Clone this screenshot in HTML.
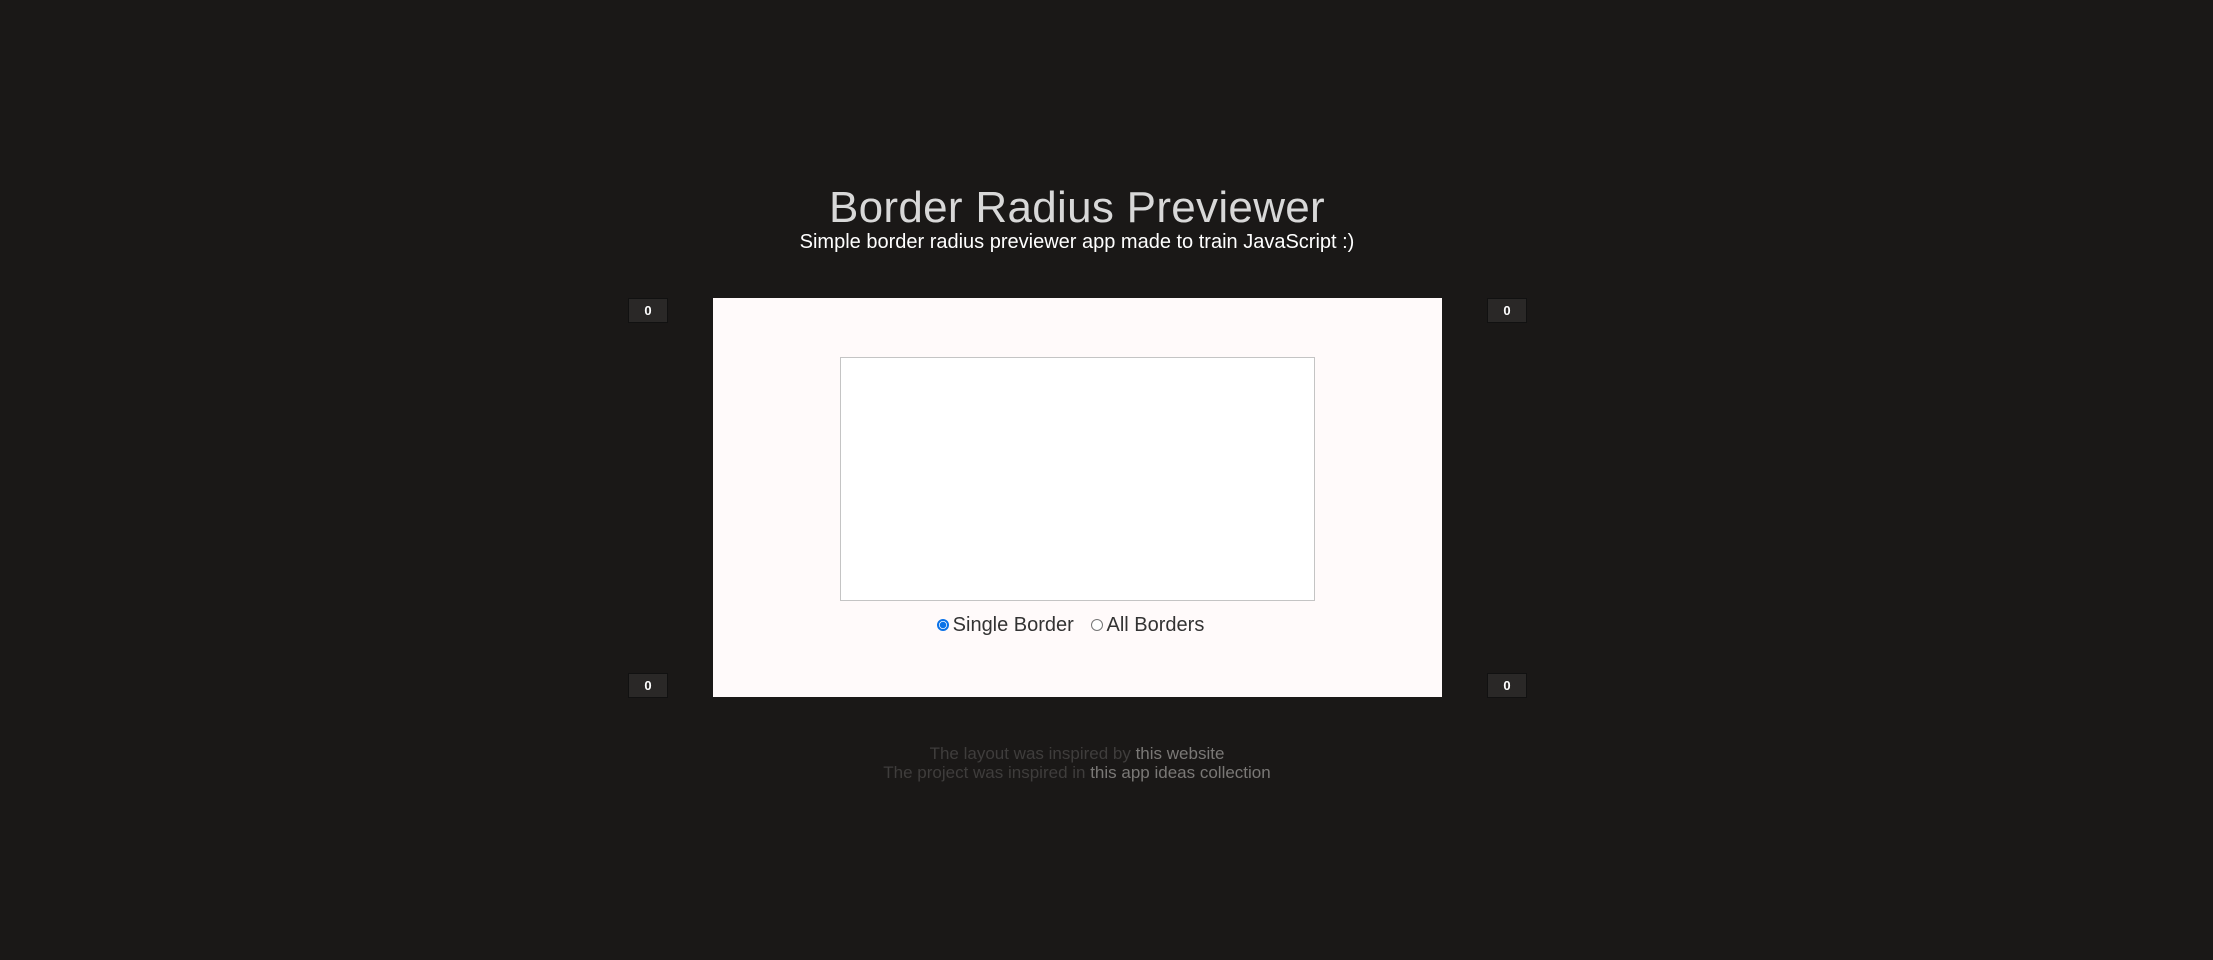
<!DOCTYPE html>
<html><head><style>
body{margin:0;width:2213px;height:960px;background:#1a1817;font-family:"Liberation Sans",sans-serif;position:relative;overflow:hidden}
.t{position:absolute;left:0;width:2154px;text-align:center}
h1{margin:0;font-weight:300;font-size:44px;color:#d8d8d8;top:183px;letter-spacing:0.3px}
.sub{top:231px;font-size:20px;color:#fff}
.box{position:absolute;left:713px;top:298px;width:729px;height:399px;background:#fffafa}
.inner{position:absolute;left:127px;top:59px;width:473px;height:242px;background:#fff;border:1px solid #c4c4c4}
.radios{position:absolute;left:0;width:715px;top:316px;text-align:center;font-size:20px;color:#333}
.rb{display:inline-block;width:12px;height:12px;border-radius:50%;border:1px solid #767676;vertical-align:0px;margin-right:4px;background:#fff;box-sizing:border-box}
.rb.on{border:2px solid #0a72e8;background:radial-gradient(circle,#0a72e8 0 3px,#fff 3.5px)}
.in{position:absolute;width:38px;height:23px;background:#2a2827;border:1px solid #111;color:#fff;font-size:13px;font-weight:bold;text-align:center;line-height:23px}
.foot{font-size:17px;color:#3f3d3c;line-height:19px;top:744px}
.foot span{color:#7a7876}
</style></head><body>
<h1 class="t">Border Radius Previewer</h1>
<div class="t sub">Simple border radius previewer app made to train JavaScript :)</div>
<div class="in" style="left:628px;top:298px">0</div>
<div class="in" style="left:1487px;top:298px">0</div>
<div class="in" style="left:628px;top:673px">0</div>
<div class="in" style="left:1487px;top:673px">0</div>
<div class="box"><div class="inner"></div>
<div class="radios"><span class="rb on"></span>Single Border &nbsp;&nbsp;<span class="rb"></span>All Borders</div></div>
<div class="t foot">The layout was inspired by <span>this website</span><br>The project was inspired in <span>this app ideas collection</span></div>
</body></html>
